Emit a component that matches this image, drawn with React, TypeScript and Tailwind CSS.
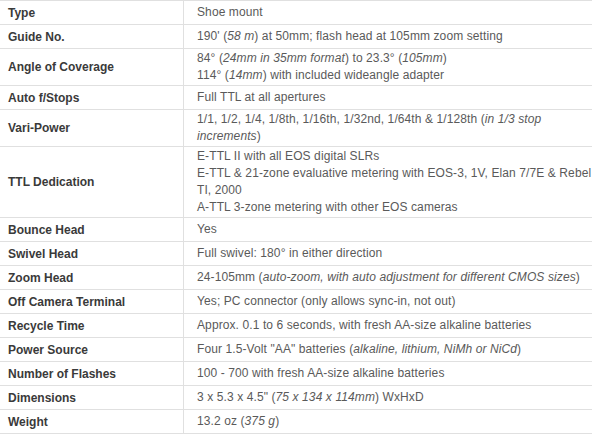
import type { ReactNode } from "react";

type Spec = { label: string; lines: ReactNode[] };

const specs: Spec[] = [
  { label: "Type", lines: ["Shoe mount"] },
  {
    label: "Guide No.",
    lines: [
      <>
        190' (<i>58 m</i>) at 50mm; flash head at 105mm zoom setting
      </>,
    ],
  },
  {
    label: "Angle of Coverage",
    lines: [
      <>
        84° (<i>24mm in 35mm format</i>) to 23.3° (<i>105mm</i>)
      </>,
      <>
        114° (<i>14mm</i>) with included wideangle adapter
      </>,
    ],
  },
  { label: "Auto f/Stops", lines: ["Full TTL at all apertures"] },
  {
    label: "Vari-Power",
    lines: [
      <>
        1/1, 1/2, 1/4, 1/8th, 1/16th, 1/32nd, 1/64th &amp; 1/128th (<i>in 1/3 stop</i>
      </>,
      <>
        <i>increments</i>)
      </>,
    ],
  },
  {
    label: "TTL Dedication",
    lines: [
      "E-TTL II with all EOS digital SLRs",
      "E-TTL & 21-zone evaluative metering with EOS-3, 1V, Elan 7/7E & Rebel",
      "TI, 2000",
      "A-TTL 3-zone metering with other EOS cameras",
    ],
  },
  { label: "Bounce Head", lines: ["Yes"] },
  { label: "Swivel Head", lines: ["Full swivel: 180° in either direction"] },
  {
    label: "Zoom Head",
    lines: [
      <>
        24-105mm (<i>auto-zoom, with auto adjustment for different CMOS sizes</i>)
      </>,
    ],
  },
  { label: "Off Camera Terminal", lines: ["Yes; PC connector (only allows sync-in, not out)"] },
  { label: "Recycle Time", lines: ["Approx. 0.1 to 6 seconds, with fresh AA-size alkaline batteries"] },
  {
    label: "Power Source",
    lines: [
      <>
        Four 1.5-Volt "AA" batteries (<i>alkaline, lithium, NiMh or NiCd</i>)
      </>,
    ],
  },
  { label: "Number of Flashes", lines: ["100 - 700 with fresh AA-size alkaline batteries"] },
  {
    label: "Dimensions",
    lines: [
      <>
        3 x 5.3 x 4.5" (<i>75 x 134 x 114mm</i>) WxHxD
      </>,
    ],
  },
  {
    label: "Weight",
    lines: [
      <>
        13.2 oz (<i>375 g</i>)
      </>,
    ],
  },
];

export default function App() {
  return (
    <div className="min-h-[437px] bg-white font-['Liberation_Sans',Arial,sans-serif] text-[12px]">
      <div className="w-[592px] border-t border-[#e0e0e0]">
        {specs.map((spec) => (
          <div key={spec.label} className="flex min-h-6 border-b border-[#e0e0e0]">
            <div className="flex w-[184px] shrink-0 items-center border-r border-[#e0e0e0] pl-2 font-bold text-[#3a3a3a]">
              {spec.label}
            </div>
            <div className="flex flex-col justify-center py-px pl-[13px] leading-[17px] tracking-[0.1px] text-[#5a5a5a]">
              {spec.lines.map((line, i) => (
                <div key={i} className="whitespace-nowrap">
                  {line}
                </div>
              ))}
            </div>
          </div>
        ))}
      </div>
    </div>
  );
}
